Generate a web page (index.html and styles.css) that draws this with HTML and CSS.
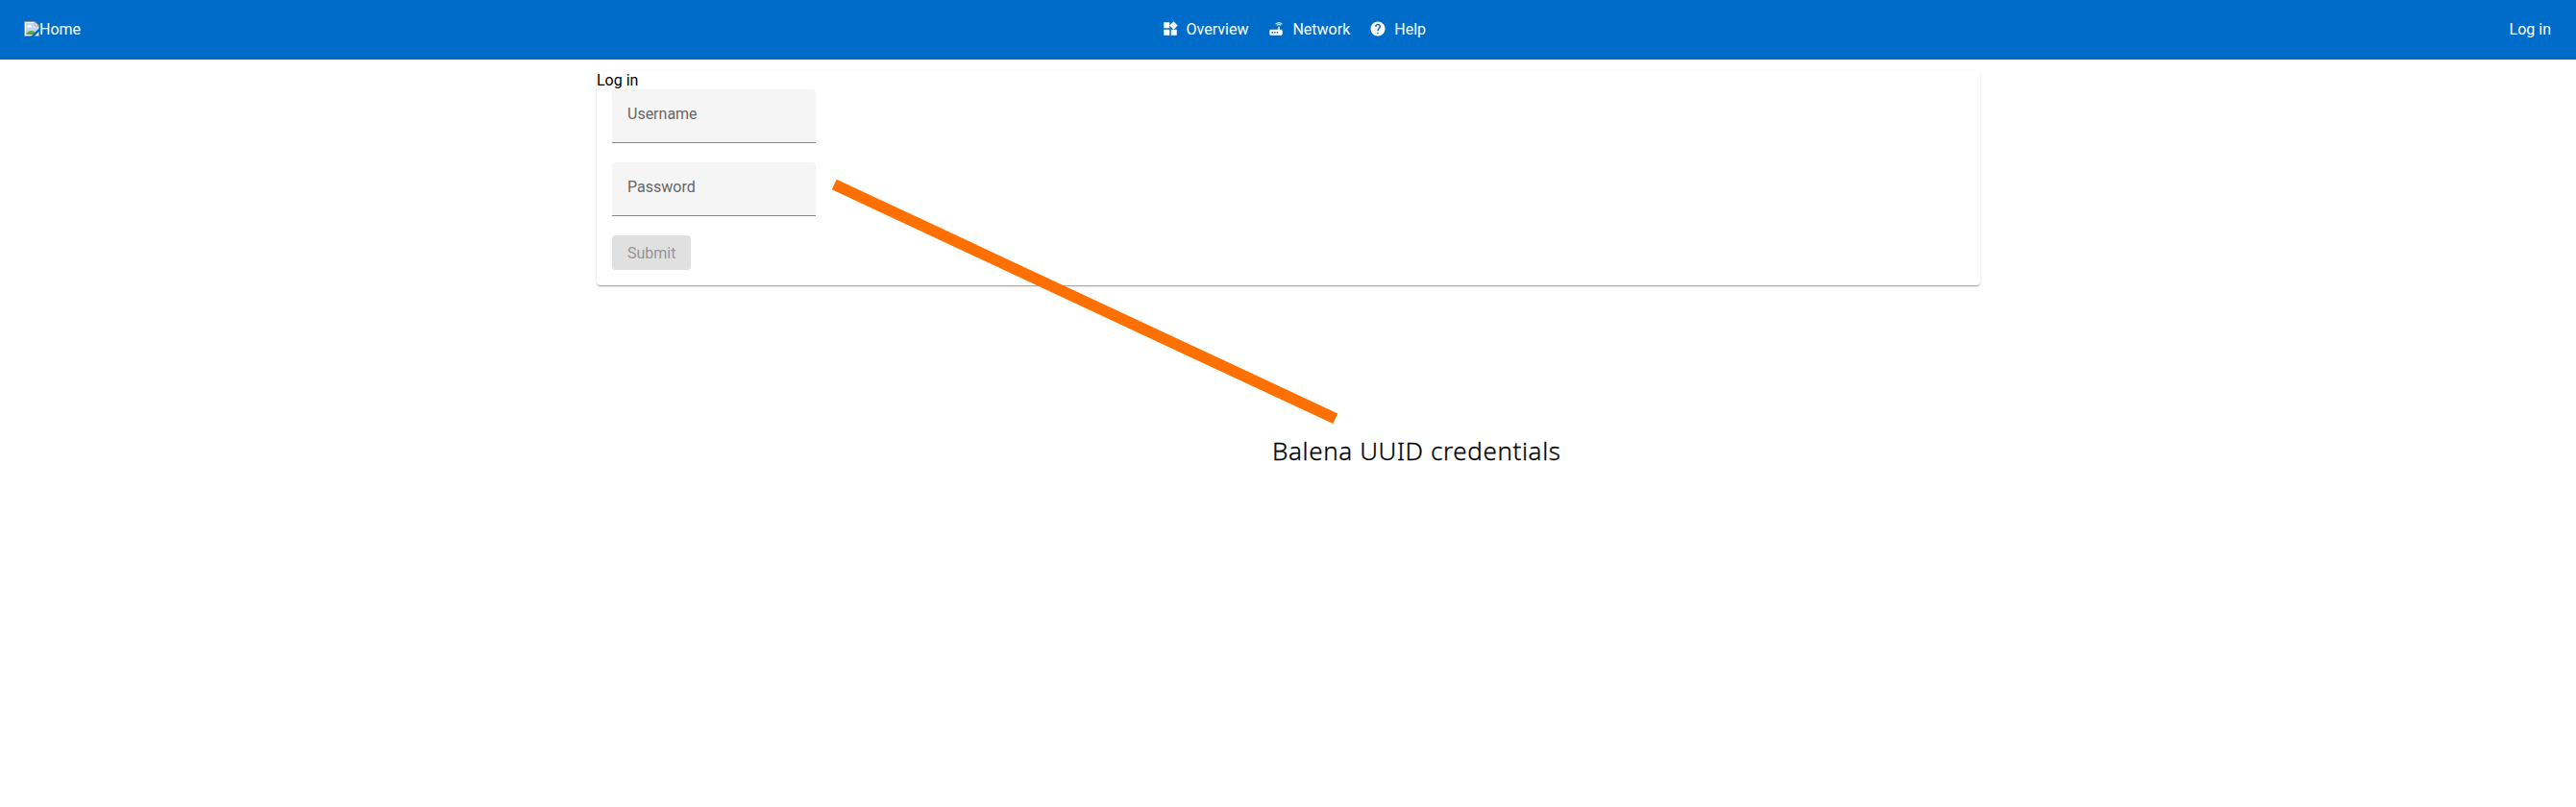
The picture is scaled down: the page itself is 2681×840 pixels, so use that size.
FILE: index.html
```
<!DOCTYPE html>
<html lang="en">

<head>
    <meta charset="UTF-8">
    <meta name="viewport" content="width=device-width, initial-scale=1.0">
    <title>Log in</title>
    <link rel="stylesheet" href="styles.css">
</head>

<body>
    <header class="toolbar">
        <a class="home" href="#">
            <svg class="home-icon" viewBox="0 0 16 16">
                <path d="M.5.5h10.500l4.500 4.500v10.500H.5z" fill="#c3d5f3" stroke="#8d9198" />
                <path d="M1.500 1.500h9v4h4v9h-13z" fill="none" stroke="#fff" />
                <path d="M3 6.500c0-1.500 1-1.500 1.300-1.500.4-1.600 2.600-1.600 3 0 1 0 1.200.7 1.200 1.500z" fill="#fff" />
                <path d="M2 14c1-3 3.200-4 5.500-4 2.500 0 4.500 1.500 5.500 4z" fill="#55a636" />
                <path d="M11 .5v4.500h4.500z" fill="#fff" stroke="#8d9198" />
                <path d="M16 7v3.500L10.500 16H7z" fill="#006cc9" />
            </svg>
            <span>Home</span>
        </a>
        <nav class="menu">
            <a class="menu-item" href="#">
                <svg class="icon" viewBox="0 0 24 24"><path d="M13 13v8h8v-8h-8zM3 21h8v-8H3v8zM3 3v8h8V3H3zm13.660-1.310L11 7.340 16.660 13l5.660-5.660-5.660-5.650z" /></svg>
                <span>Overview</span>
            </a>
            <a class="menu-item" href="#">
                <svg class="icon" viewBox="0 0 24 24"><path d="M20.200 5.900l.8-.8C19.600 3.700 17.800 3 16 3s-3.600.7-5 2.100l.8.8C13 4.800 14.500 4.200 16 4.200s3 .6 4.200 1.700zm-.9.8c-.9-.9-2.100-1.400-3.300-1.400s-2.400.5-3.300 1.400l.8.8c.7-.7 1.600-1 2.500-1s1.800.3 2.500 1l.8-.8zM19 13h-2V9h-2v4H5c-1.100 0-2 .9-2 2v4c0 1.100.9 2 2 2h14c1.100 0 2-.9 2-2v-4c0-1.100-.9-2-2-2zM8 18H6v-2h2v2zm3.500 0h-2v-2h2v2zm3.500 0h-2v-2h2v2z" /></svg>
                <span>Network</span>
            </a>
            <a class="menu-item" href="#">
                <svg class="icon" viewBox="0 0 24 24"><path d="M12 2C6.480 2 2 6.480 2 12s4.480 10 10 10 10-4.480 10-10S17.520 2 12 2zm1 17h-2v-2h2v2zm2.070-7.750l-.9.920C13.450 12.900 13 13.500 13 15h-2v-.5c0-1.100.45-2.100 1.170-2.830l1.240-1.260c.37-.36.59-.86.59-1.410 0-1.100-.9-2-2-2s-2 .9-2 2H8c0-2.210 1.790-4 4-4s4 1.790 4 4c0 .88-.36 1.680-.93 2.250z" /></svg>
                <span>Help</span>
            </a>
        </nav>
        <a class="login-link" href="#">Log in</a>
    </header>

    <main class="card">
        <div class="card-title">Log in</div>
        <form class="login-form">
            <label class="field">Username</label>
            <label class="field">Password</label>
            <button class="submit" type="submit" disabled>Submit</button>
        </form>
    </main>

    <!-- Callout pointing at the login fields -->
    <svg class="callout-line" viewBox="0 0 540 270">
        <line x1="8.200" y1="12" x2="529.800" y2="255.800" />
    </svg>
    <p class="callout-text">Balena UUID credentials</p>
</body>

</html>
```
FILE: styles.css
```
* {
    box-sizing: border-box;
}

body {
    margin: 0;
    min-height: 100vh;
    background-color: #fff;
    color: #000;
    font-family: Roboto, sans-serif;
    font-size: 16px;
}

a {
    color: #fff;
    text-decoration: none;
}

.toolbar {
    display: flex;
    justify-content: space-between;
    align-items: center;
    height: 62px;
    padding: 0 26px 2px 25px;
    background-color: #006cc9;
}

.home {
    display: flex;
    align-items: center;
}

.home-icon {
    width: 16px;
    height: 16px;
}

.menu {
    display: flex;
    gap: 20px;
    padding-right: 3px;
}

.menu-item {
    display: flex;
    align-items: center;
    gap: 8px;
}

.icon {
    width: 18px;
    height: 18px;
    fill: #fff;
}

.card {
    width: 1440px;
    margin: 12px auto 0;
    padding-left: 0.5px;
    border-radius: 4px;
    box-shadow: 0 2px 1px -1px rgba(0, 0, 0, 0.2), 0 1px 1px 0 rgba(0, 0, 0, 0.14), 0 1px 3px 0 rgba(0, 0, 0, 0.12);
}

.card-title {
    line-height: 19px;
}

.login-form {
    display: flex;
    flex-direction: column;
    align-items: flex-start;
    gap: 20px;
    padding: 0 16px 16px;
}

.field {
    width: 212px;
    height: 56px;
    padding: 16px;
    border-bottom: 1px solid #8a8a8a;
    border-radius: 4px 4px 0 0;
    background-color: #f5f5f5;
    color: #666;
    line-height: 19px;
}

.submit {
    height: 36px;
    padding: 0 16px;
    border: none;
    border-radius: 4px;
    background-color: #e0e0e0;
    color: #949494;
    font-family: inherit;
    font-size: 16px;
}

.callout-line {
    position: absolute;
    top: 180px;
    left: 860px;
    width: 540px;
    height: 270px;
    stroke: #ff7000;
    stroke-width: 11.7px;
}

.callout-text {
    position: absolute;
    top: 451px;
    left: 1324px;
    margin: 0;
    font-family: "Noto Sans", sans-serif;
    font-size: 26px;
    font-weight: 300;
    line-height: 36px;
    letter-spacing: 0.6px;
    color: #000;
    -webkit-text-stroke: 0.3px #000;
    white-space: nowrap;
}
```
